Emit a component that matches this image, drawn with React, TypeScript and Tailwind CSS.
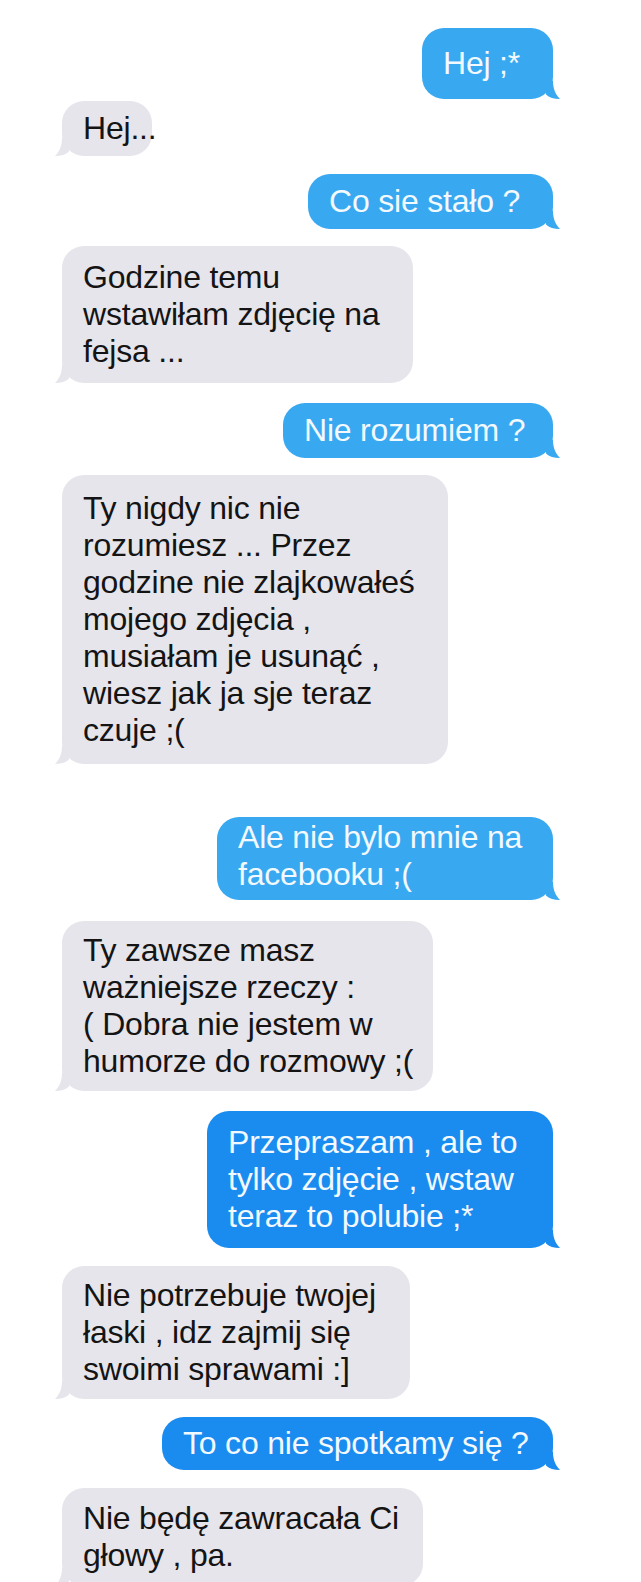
import React from 'react';

type Msg = {
  me: boolean;
  lines: string[];
  box: string; // width, top margin, vertical padding
  deep?: boolean;
};

const messages: Msg[] = [
  { me: true, lines: ['Hej ;*'], box: 'w-[131px] mt-[28px] py-[17px]' },
  { me: false, lines: ['Hej...'], box: 'w-[90px] mt-[2px] py-[9px]' },
  { me: true, lines: ['Co sie stało ?'], box: 'w-[245px] mt-[18px] py-[9px]' },
  {
    me: false,
    lines: ['Godzine temu', 'wstawiłam zdjęcię na', 'fejsa ...'],
    box: 'w-[351px] mt-[17px] py-[13px]',
  },
  { me: true, lines: ['Nie rozumiem ?'], box: 'w-[270px] mt-[20px] py-[9px]' },
  {
    me: false,
    lines: [
      'Ty nigdy nic nie',
      'rozumiesz ... Przez',
      'godzine nie zlajkowałeś',
      'mojego zdjęcia ,',
      'musiałam je usunąć ,',
      'wiesz jak ja sje teraz',
      'czuje ;(',
    ],
    box: 'w-[386px] mt-[17px] py-[15px]',
  },
  {
    me: true,
    lines: ['Ale nie bylo mnie na', 'facebooku ;('],
    box: 'w-[336px] mt-[53px] pt-[2px] pb-[7px]',
  },
  {
    me: false,
    lines: ['Ty zawsze masz', 'ważniejsze rzeczy :', '( Dobra nie jestem w', 'humorze do rozmowy ;('],
    box: 'w-[371px] mt-[21px] py-[11px]',
  },
  {
    me: true,
    lines: ['Przepraszam , ale to', 'tylko zdjęcie , wstaw', 'teraz to polubie ;*'],
    box: 'w-[346px] mt-[20px] py-[13px]',
    deep: true,
  },
  {
    me: false,
    lines: ['Nie potrzebuje twojej', 'łaski , idz zajmij się', 'swoimi sprawami :]'],
    box: 'w-[348px] mt-[18px] py-[11px]',
  },
  {
    me: true,
    lines: ['To co nie spotkamy się ?'],
    box: 'w-[391px] mt-[18px] py-[8px]',
    deep: true,
  },
  {
    me: false,
    lines: ['Nie będę zawracała Ci', 'głowy , pa.'],
    box: 'w-[361px] mt-[18px] py-[12px]',
  },
];

const tone = (m: Msg) =>
  m.me
    ? m.deep
      ? { bg: 'bg-[#1a8bef]', fill: 'fill-[#1a8bef]' }
      : { bg: 'bg-[#38a8f0]', fill: 'fill-[#38a8f0]' }
    : { bg: 'bg-[#e6e5eb]', fill: 'fill-[#e6e5eb]' };

// little hook at the bottom corner of an iMessage bubble
function Tail({ me, fill }: { me: boolean; fill: string }) {
  return (
    <svg
      width="14"
      height="18"
      viewBox="0 0 14 18"
      className={me ? 'absolute bottom-0 right-[-7px]' : 'absolute bottom-0 left-[-7px] -scale-x-100'}
    >
      <path className={fill} d="M0 0 H7 C7 7 9 13 14 18 C8 18 3 16.5 0 13.5 Z" />
    </svg>
  );
}

function Bubble({ msg }: { msg: Msg }) {
  const t = tone(msg);
  return (
    <div
      className={`relative shrink-0 rounded-[22px] pl-[21px] pr-[12px] whitespace-nowrap text-[32px] leading-[37px] tracking-[-0.2px] ${t.bg} ${
        msg.me ? 'self-end text-[#f2f9ff]' : 'self-start text-[#141414]'
      } ${msg.box}`}
    >
      {msg.lines.map((line, i) => (
        <div key={i}>{line}</div>
      ))}
      <Tail me={msg.me} fill={t.fill} />
    </div>
  );
}

export default function App() {
  return (
    <div className="h-[1582px] w-full overflow-hidden bg-white flex flex-col pl-[62px] pr-[88px] font-['Liberation_Sans',Arial,sans-serif]">
      {messages.map((m, i) => (
        <Bubble key={i} msg={m} />
      ))}
    </div>
  );
}
